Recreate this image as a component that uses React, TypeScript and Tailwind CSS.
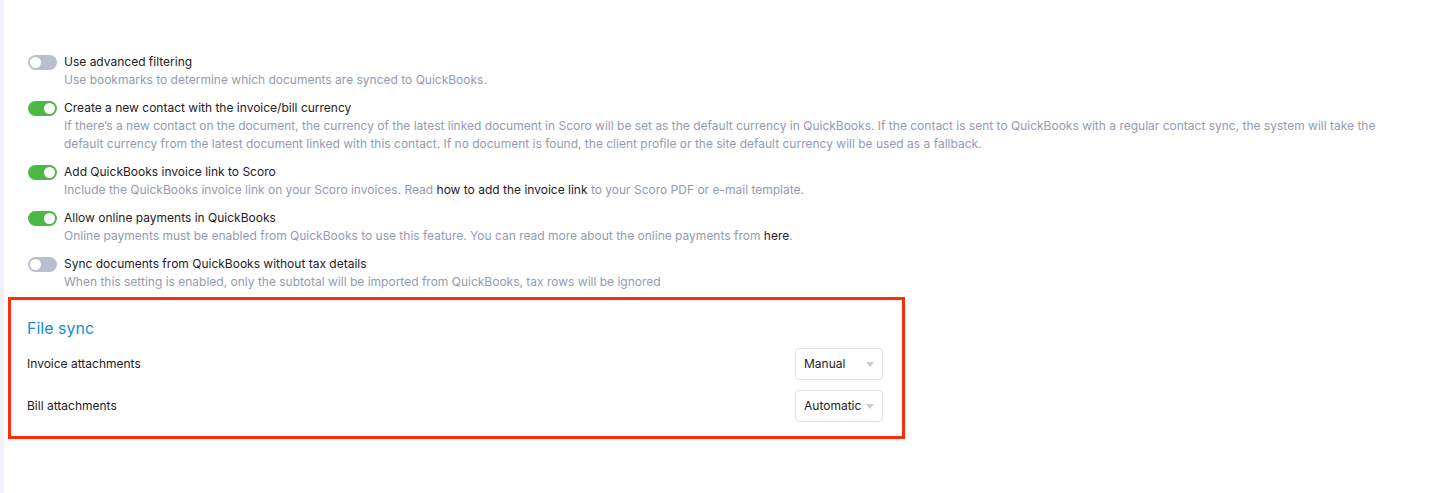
import React from 'react';

interface Setting {
  title: string;
  on: boolean;
  desc: React.ReactNode;
}

const Toggle: React.FC<{ on: boolean }> = ({ on }) => (
  <div
    className={`mt-[2px] flex h-[15px] w-[29px] shrink-0 items-center rounded-full px-[2px] ${
      on ? 'justify-end bg-[#4cb944]' : 'justify-start bg-[#b9bfcf]'
    }`}
  >
    <div className="h-[11px] w-[11px] rounded-full bg-white" />
  </div>
);

const Select: React.FC<{ value: string }> = ({ value }) => (
  <div className="flex h-[32px] w-[88px] items-center justify-between rounded-[4px] border border-[#dfe2ea] bg-white pl-[8px] pr-[8px] text-[12px] text-[#1d2129]">
    <span>{value}</span>
    <svg width="8" height="5" viewBox="0 0 8 5" className="shrink-0">
      <path d="M0 0 H8 L4 5 Z" fill="#c9cdd6" />
    </svg>
  </div>
);

const settings: Setting[] = [
  {
    title: 'Use advanced filtering',
    on: false,
    desc: 'Use bookmarks to determine which documents are synced to QuickBooks.',
  },
  {
    title: 'Create a new contact with the invoice/bill currency',
    on: true,
    desc:
      'If there\u2019s a new contact on the document, the currency of the latest linked document in Scoro will be set as the default currency in QuickBooks. If the contact is sent to QuickBooks with a regular contact sync, the system will take the default currency from the latest document linked with this contact. If no document is found, the client profile or the site default currency will be used as a fallback.',
  },
  {
    title: 'Add QuickBooks invoice link to Scoro',
    on: true,
    desc: (
      <>
        Include the QuickBooks invoice link on your Scoro invoices. Read{' '}
        <span className="text-[#1d2129]">how to add the invoice link</span> to your Scoro PDF or e-mail template.
      </>
    ),
  },
  {
    title: 'Allow online payments in QuickBooks',
    on: true,
    desc: (
      <>
        Online payments must be enabled from QuickBooks to use this feature. You can read more about the online
        payments from <span className="text-[#1d2129]">here</span>.
      </>
    ),
  },
  {
    title: 'Sync documents from QuickBooks without tax details',
    on: false,
    desc: 'When this setting is enabled, only the subtotal will be imported from QuickBooks, tax rows will be ignored',
  },
];

const App: React.FC = () => {
  return (
    <div className="flex h-[493px] w-full bg-white font-['Inter',sans-serif]">
      <div className="w-[4px] shrink-0 bg-[#eef1f9]" />
      <div className="flex-1 pt-[53px] pr-[40px]">
        <div className="flex flex-col gap-[10px] pl-[24px]">
          {settings.map((s) => (
            <div key={s.title} className="flex gap-[7px]">
              <Toggle on={s.on} />
              <div className="flex flex-col">
                <div className="text-[12px] leading-[18px] text-[#1d2129]">{s.title}</div>
                <div className="text-[12px] leading-[18px] text-[#939bb0]">{s.desc}</div>
              </div>
            </div>
          ))}
        </div>

        <div className="ml-[4px] mt-[6px] w-[897px] border-[3px] border-[#ff2d0a] pb-[14px] pl-[16px] pr-[19px] pt-[16px]">
          <div className="text-[16px] leading-[24px] text-[#1a8ad8]">File sync</div>
          <div className="mt-[8px] flex flex-col gap-[10px]">
            <div className="flex items-center justify-between">
              <span className="text-[12px] text-[#1d2129]">Invoice attachments</span>
              <Select value="Manual" />
            </div>
            <div className="flex items-center justify-between">
              <span className="text-[12px] text-[#1d2129]">Bill attachments</span>
              <Select value="Automatic" />
            </div>
          </div>
        </div>
      </div>
    </div>
  );
};

export default App;
